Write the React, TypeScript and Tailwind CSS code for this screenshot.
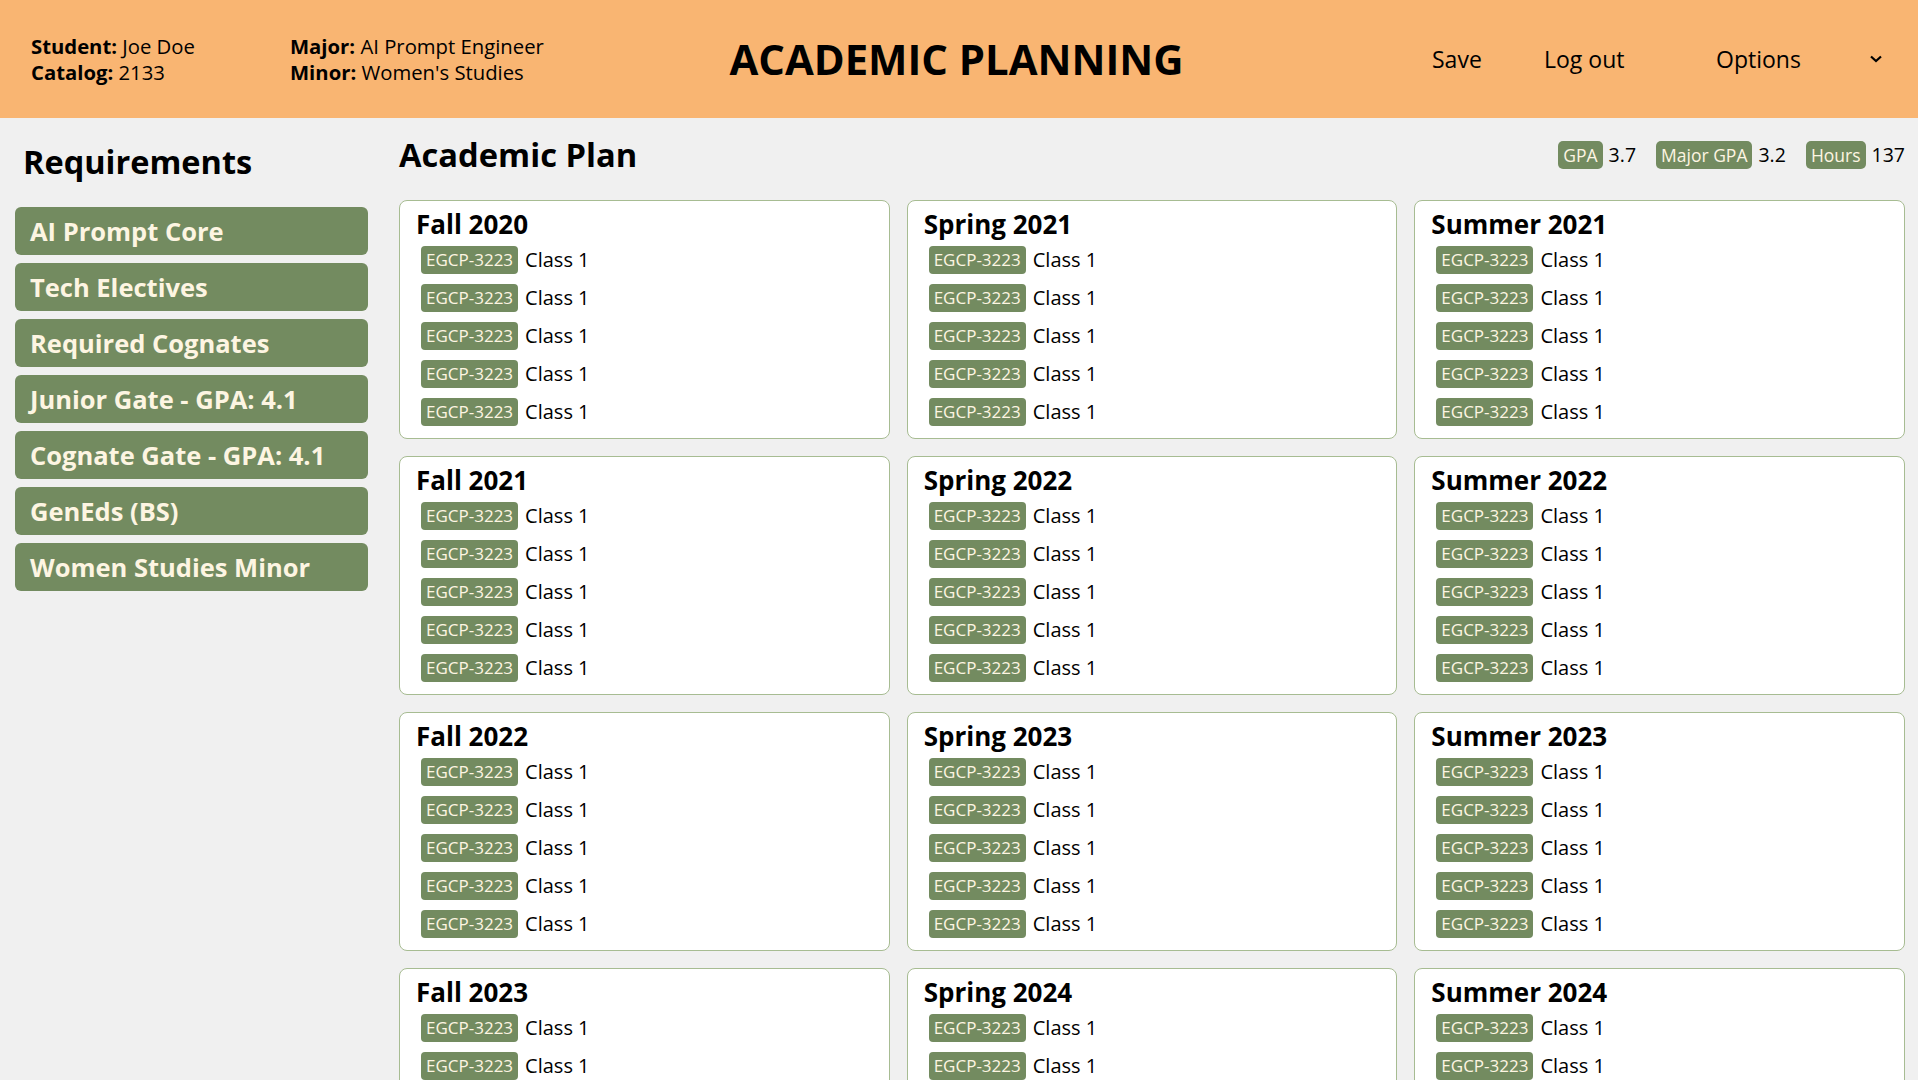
import React from 'react';

const requirements = [
    'AI Prompt Core',
    'Tech Electives',
    'Required Cognates',
    'Junior Gate - GPA: 4.1',
    'Cognate Gate - GPA: 4.1',
    'GenEds (BS)',
    'Women Studies Minor',
];

const terms = [
    'Fall 2020', 'Spring 2021', 'Summer 2021',
    'Fall 2021', 'Spring 2022', 'Summer 2022',
    'Fall 2022', 'Spring 2023', 'Summer 2023',
    'Fall 2023', 'Spring 2024', 'Summer 2024',
];

const courses = [1, 2, 3, 4, 5];

const Stat: React.FC<{ label: string; value: string }> = ({ label, value }) => (
    <div className="flex items-center">
        <span className="h-[28px] px-[5px] flex items-center rounded-[5px] bg-[#738b60] text-[#fdf5e2] text-[17.5px]">{label}</span>
        <span className="ml-[6px] text-[19.5px]">{value}</span>
    </div>
);

const TermCard: React.FC<{ title: string }> = ({ title }) => (
    <div className="bg-white border border-[#a7bc92] rounded-[8px] px-[16px] pt-[5px] pb-[12px]">
        <h3 className="text-[26px] leading-[36px] font-bold">{title}</h3>
        <ul className="mt-[4px] ml-[5px] flex flex-col gap-[10px]">
            {courses.map((c) => (
                <li key={c} className="h-[28px] flex items-center gap-[7px]">
                    <span className="h-[28px] px-[5px] flex items-center rounded-[4px] bg-[#738b60] text-[#fdf5e2] text-[17px]">EGCP-3223</span>
                    <span className="text-[20px] leading-[28px]">Class 1</span>
                </li>
            ))}
        </ul>
    </div>
);

const App: React.FC = () => {
    return (
        <div className="min-h-screen bg-[#f0f0f0] text-black font-['Open_Sans',sans-serif]">
            <header className="h-[118px] bg-[#f9b572] grid grid-cols-[1fr_auto_1fr] items-center pl-[31px] pr-[36px]">
                <div className="flex text-[20.3px] leading-[26px]">
                    <div className="w-[259px]">
                        <div><b>Student:</b> Joe Doe</div>
                        <div><b>Catalog:</b> 2133</div>
                    </div>
                    <div>
                        <div><b>Major:</b> AI Prompt Engineer</div>
                        <div><b>Minor:</b> Women's Studies</div>
                    </div>
                </div>
                <h1 className="text-[41.8px] font-bold">ACADEMIC PLANNING</h1>
                <nav className="flex justify-end items-center text-[23px]">
                    <span className="w-[112px]">Save</span>
                    <span className="w-[172px]">Log out</span>
                    <div className="w-[166px] flex items-center justify-between">
                        <span>Options</span>
                        <svg width="12" height="8" viewBox="0 0 12 8" fill="none" stroke="black" strokeWidth="2.2">
                            <polyline points="1,1.5 6,6 11,1.5" />
                        </svg>
                    </div>
                </nav>
            </header>

            <div className="flex">
                <aside className="w-[368px] pl-[15px] pt-[24px] shrink-0">
                    <h2 className="text-[32.5px] leading-[40px] font-bold pl-[8px] mb-[25px]">Requirements</h2>
                    <div className="flex flex-col gap-[8px]">
                        {requirements.map((r) => (
                            <button key={r} className="h-[48px] w-full flex items-center pl-[15px] rounded-[6px] bg-[#738b60] text-[#fdf5e2] text-[25.5px] font-bold text-left">
                                {r}
                            </button>
                        ))}
                    </div>
                </aside>

                <main className="flex-1 ml-[31px] pr-[13px] pt-[17px]">
                    <div className="h-[40px] mb-[25px] flex items-center justify-between">
                        <h2 className="text-[32.7px] leading-[40px] font-bold">Academic Plan</h2>
                        <div className="flex items-center gap-[20px]">
                            <Stat label="GPA" value="3.7" />
                            <Stat label="Major GPA" value="3.2" />
                            <Stat label="Hours" value="137" />
                        </div>
                    </div>
                    <div className="grid grid-cols-3 gap-[17px] pb-[20px]">
                        {terms.map((t) => (
                            <TermCard key={t} title={t} />
                        ))}
                    </div>
                </main>
            </div>
        </div>
    );
};

export default App;
